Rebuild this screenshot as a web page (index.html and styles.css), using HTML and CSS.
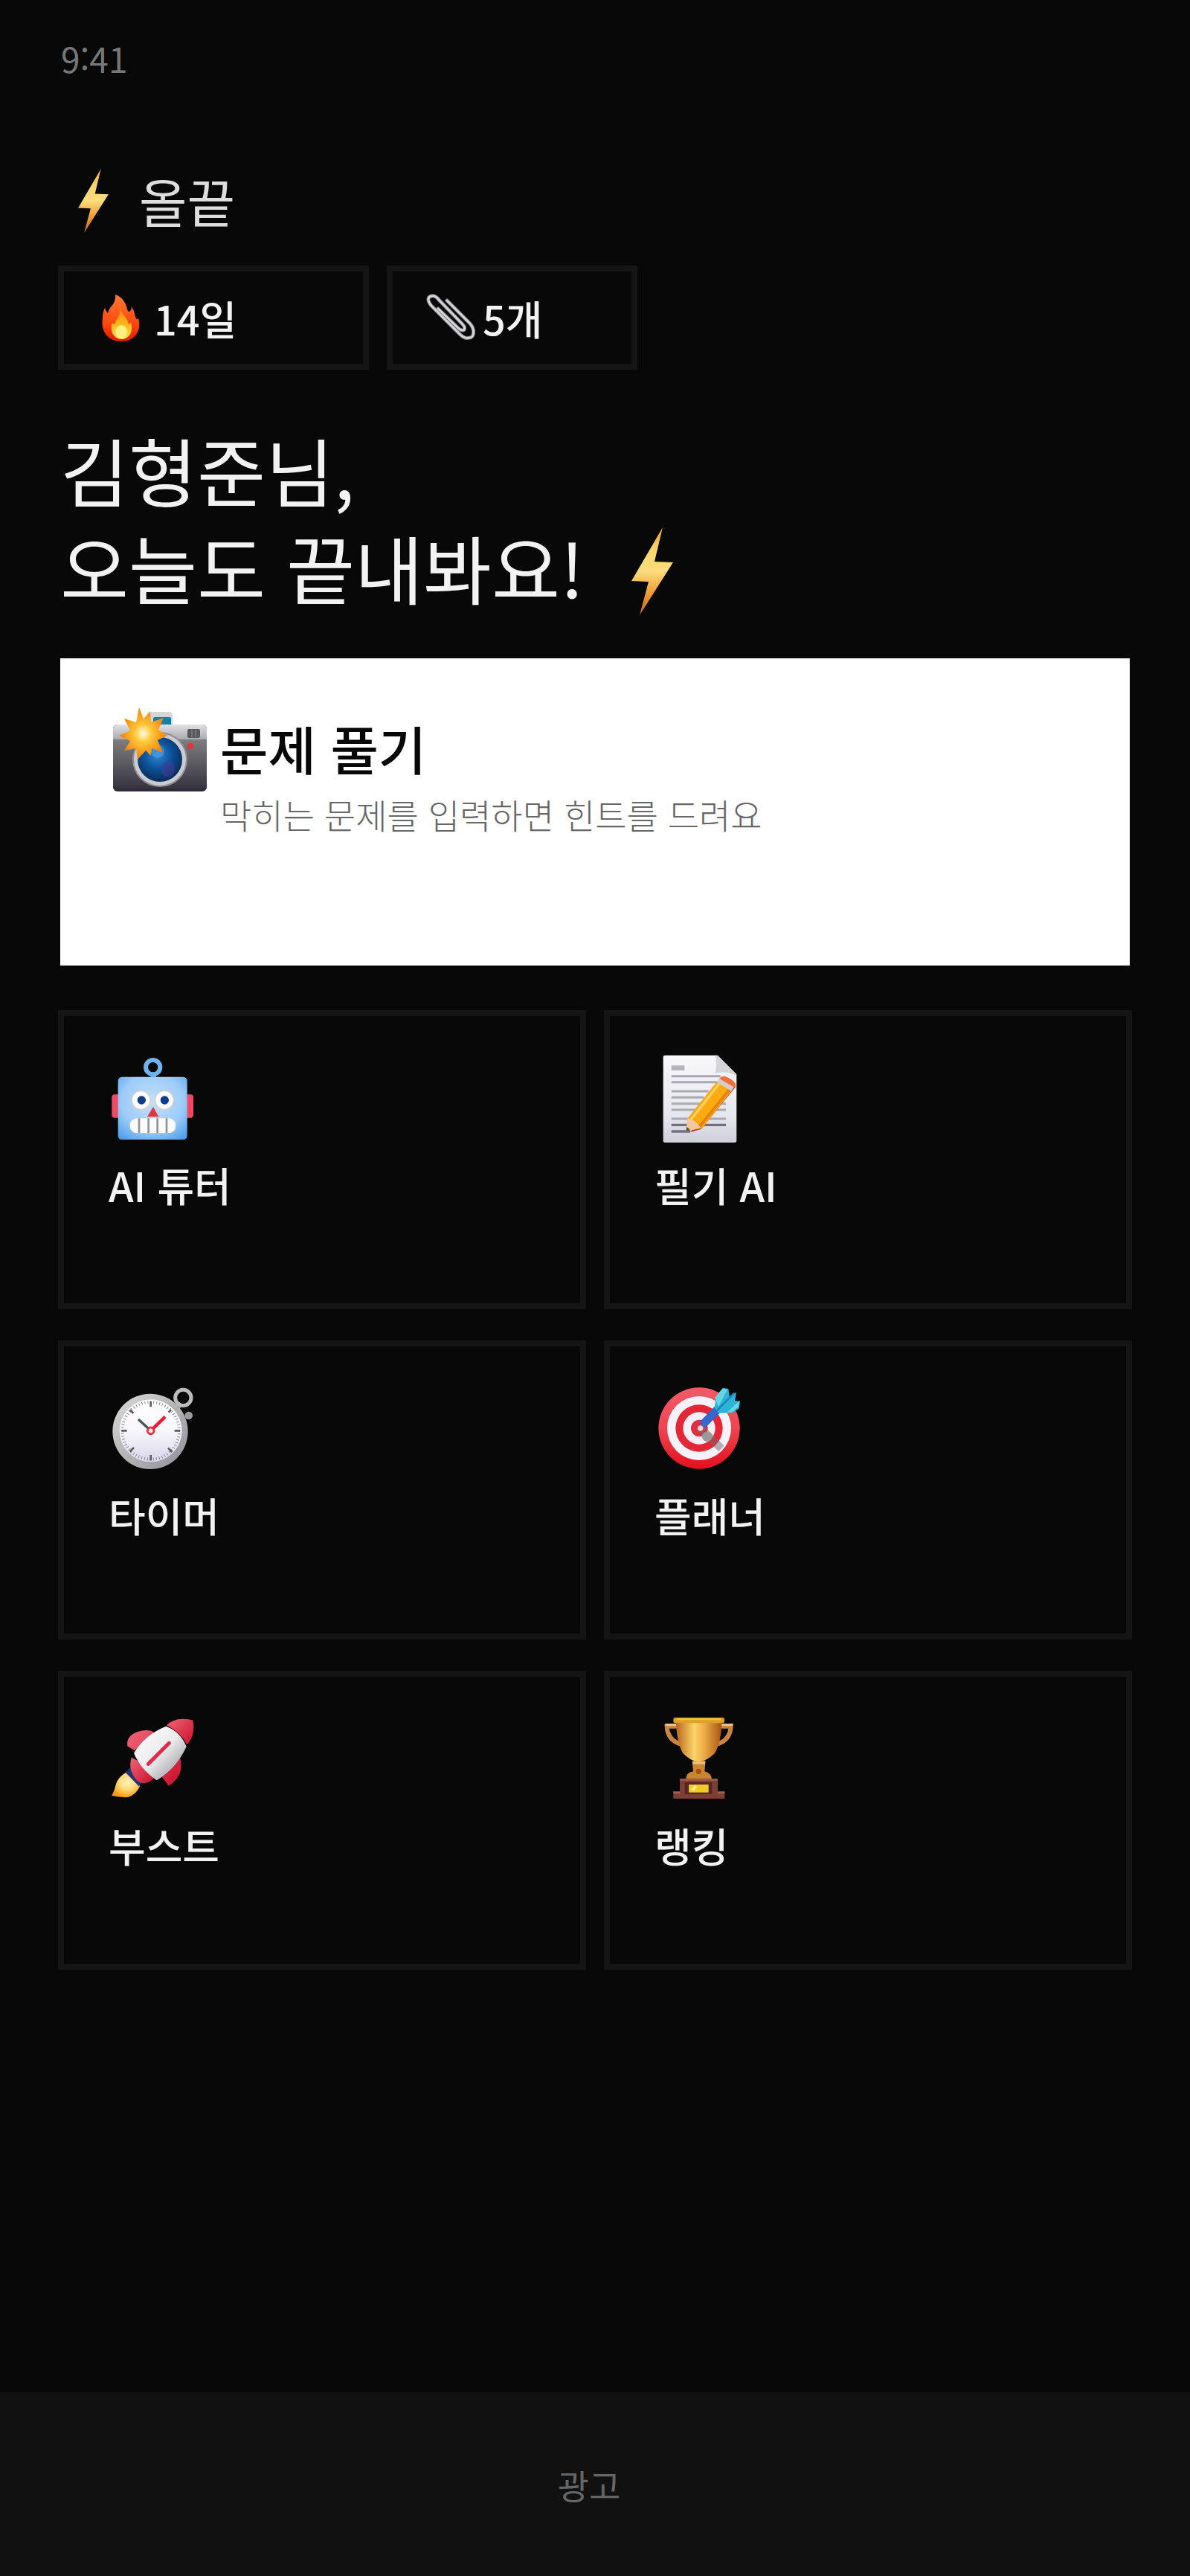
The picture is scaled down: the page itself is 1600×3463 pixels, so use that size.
FILE: index.html
```html
<!DOCTYPE html>
<html lang="ko">
<head>
<meta charset="utf-8">
<meta name="viewport" content="width=device-width, initial-scale=1">
<title>올끝</title>
<link rel="stylesheet" href="styles.css">
</head>
<body>
<svg class="defs" width="0" height="0" aria-hidden="true">
  <defs>
    <linearGradient id="boltFill" x1="0" y1="0" x2="0" y2="1"><stop offset="0" stop-color="#f0a030"/><stop offset=".25" stop-color="#fbd56c"/><stop offset=".5" stop-color="#fddc7c"/><stop offset=".72" stop-color="#f0a23c"/><stop offset="1" stop-color="#c96a12"/></linearGradient>
    <linearGradient id="flame" x1="0" y1="0" x2="0" y2="1"><stop offset="0" stop-color="#ff7a33"/><stop offset=".6" stop-color="#ff4a10"/><stop offset="1" stop-color="#e01800"/></linearGradient>
    <linearGradient id="flameIn" x1="0" y1="0" x2="0" y2="1"><stop offset="0" stop-color="#ff8a10"/><stop offset=".5" stop-color="#ffb41c"/><stop offset="1" stop-color="#ffe050"/></linearGradient>
    <linearGradient id="camBody" x1="0" y1="0" x2="0" y2="1"><stop offset="0" stop-color="#7e7e80"/><stop offset="1" stop-color="#37343f"/></linearGradient>
    <linearGradient id="camTop" x1="0" y1="0" x2="0" y2="1"><stop offset="0" stop-color="#e2e2e6"/><stop offset="1" stop-color="#a9a9ae"/></linearGradient>
    <radialGradient id="lens" cx=".45" cy=".4" r=".6"><stop offset="0" stop-color="#2f86d6"/><stop offset=".55" stop-color="#0c4f96"/><stop offset="1" stop-color="#0a2c55"/></radialGradient>
    <radialGradient id="burst"><stop offset="0" stop-color="#fffbe0"/><stop offset=".35" stop-color="#ffc838"/><stop offset="1" stop-color="#f57c08"/></radialGradient>
    <radialGradient id="robotFace" cx=".5" cy=".4" r=".75"><stop offset="0" stop-color="#c4e0fc"/><stop offset=".6" stop-color="#9ccbf8"/><stop offset="1" stop-color="#4a9cea"/></radialGradient>
    <linearGradient id="paper" x1="0" y1="0" x2="0" y2="1"><stop offset="0" stop-color="#f8f8fa"/><stop offset=".7" stop-color="#e6e6ee"/><stop offset="1" stop-color="#cfcfda"/></linearGradient>
    <linearGradient id="dial" x1="0" y1="0" x2="0" y2="1"><stop offset="0" stop-color="#ffffff"/><stop offset=".5" stop-color="#f8f7fc"/><stop offset="1" stop-color="#d9d6ea"/></linearGradient>
    <linearGradient id="rim" x1="0" y1="0" x2="1" y2="1"><stop offset="0" stop-color="#dcdcdc"/><stop offset=".5" stop-color="#b4b4b6"/><stop offset="1" stop-color="#918f9c"/></linearGradient>
    <linearGradient id="board" x1="0" y1="0" x2="0" y2="1"><stop offset="0" stop-color="#f25a66"/><stop offset=".5" stop-color="#ee4552"/><stop offset="1" stop-color="#e3101c"/></linearGradient>
    <linearGradient id="hull" x1="0" y1="0" x2="1" y2="1"><stop offset="0" stop-color="#ffffff"/><stop offset=".5" stop-color="#ebebed"/><stop offset="1" stop-color="#86868e"/></linearGradient>
    <linearGradient id="redPart" x1="0" y1="0" x2="1" y2="1"><stop offset="0" stop-color="#f26476"/><stop offset="1" stop-color="#c80f2c"/></linearGradient>
    <radialGradient id="exhaust" cx=".55" cy=".4" r=".6"><stop offset="0" stop-color="#fff3b8"/><stop offset=".5" stop-color="#ffd97a"/><stop offset="1" stop-color="#f59a12"/></radialGradient>
    <linearGradient id="cup" x1="0" y1="0" x2="1" y2="0"><stop offset="0" stop-color="#b8641a"/><stop offset=".4" stop-color="#fbd468"/><stop offset=".6" stop-color="#eeae48"/><stop offset="1" stop-color="#a85414"/></linearGradient>
    <symbol id="bolt" viewBox="0 0 56 118"><path d="M42 0 0 72l23 1-12 45L56 47 31 46z" fill="url(#boltFill)"/></symbol>
  </defs>
</svg>

<header class="top">
  <p class="clock">9:41</p>
  <div class="brand">
    <svg class="brand-bolt" aria-hidden="true"><use href="#bolt"/></svg>
    <span>올끝</span>
  </div>
  <div class="badges">
    <div class="badge badge-streak">
      <svg class="badge-icon" viewBox="131 399 66 64" aria-hidden="true">
        <path d="M155 400c10 3 15 13 16 20 1 3 3 4 4 2 2-2 2-3 1-6 4 4 5 9 6 14 1 3 2 4 4 2 5 18-6 31-23 31-17 0-28-13-25-31 0-6 1-10 3-14 1 3 2 5 4 7 1-3 1-4 3-7 3-4 8-8 7-18z" fill="url(#flame)"/>
        <path d="M162 419c1 7 9 12 10 18 0 3 2 3 4 1 4 12-3 22-12 22-11 0-17-11-13-22 2 2 3 2 4 0 2-6 7-10 7-19z" fill="url(#flameIn)"/>
        <ellipse cx="163" cy="450" rx="8" ry="9" fill="#fff080"/>
      </svg>
      <span>14일</span>
    </div>
    <div class="badge badge-clips">
      <svg class="badge-icon" viewBox="573 399 66 64" aria-hidden="true">
        <g fill="none" stroke-linecap="round" stroke-linejoin="round">
          <path d="M601 408l30 30c8 8 7 20 0 20-5 2-9-1-13-5l-38-38c-6-7-5-12 0-13 4-1 7 1 10 5l32 33c4 4 3 8 0 8-2 0-4-1-6-3l-27-26" stroke="#77767c" stroke-width="5"/>
          <path d="M601 408l30 30c8 8 7 20 0 20-5 2-9-1-13-5l-38-38c-6-7-5-12 0-13 4-1 7 1 10 5l32 33c4 4 3 8 0 8-2 0-4-1-6-3l-27-26" stroke="#d4d3d8" stroke-width="3"/>
        </g>
      </svg>
      <span>5개</span>
    </div>
  </div>
</header>

<main class="home">
  <h1 class="greeting">
    <span class="greeting-line">김형준님,</span>
    <span class="greeting-line">오늘도 끝내봐요!<svg class="greeting-bolt" aria-hidden="true"><use href="#bolt"/></svg></span>
  </h1>

  <a class="hero" href="#solve">
    <svg class="hero-icon" viewBox="150 948 130 120" aria-hidden="true">
      <rect x="199" y="957" width="33" height="24" rx="5" fill="#d4d4da"/>
      <rect x="206" y="964" width="24" height="13" rx="2" fill="#1681a8"/>
      <rect x="152" y="974" width="126" height="90" rx="6" fill="#302c3c"/>
      <path d="M158 974h114a6 6 0 0 1 6 6v14H152v-14a6 6 0 0 1 6-6z" fill="url(#camTop)"/>
      <path d="M152 994h126v66H152z" fill="url(#camBody)"/>
      <rect x="252" y="980" width="17" height="12" rx="2" fill="#5a5a5e"/><path d="M258 981v10M263 981v10" stroke="#8c8c90"/>
      <circle cx="256" cy="1003" r="4" fill="#e8313a"/>
      <circle cx="215" cy="1021" r="37" fill="#8f9095"/><circle cx="215" cy="1021" r="35" fill="#cbccd3"/>
      <circle cx="215" cy="1021" r="30" fill="url(#lens)"/>
      <ellipse cx="226" cy="1034" rx="9" ry="11" fill="#4938a0" opacity=".5"/><circle cx="212" cy="1010" r="9" fill="#5bb2f2" opacity=".45"/>
      <path d="M187 951l6 15 9-10 1 15 17-6-7 16 12 8-13 6 7 17-15-6-1 10-7-7-11 12-2-15-16 3 8-13-15-7 15-7-8-16 16 5z" fill="url(#burst)"/>
    </svg>
    <span class="hero-copy">
      <strong class="hero-title">문제 풀기</strong>
      <span class="hero-sub">막히는 문제를 입력하면 힌트를 드려요</span>
    </span>
  </a>

  <nav class="tiles" aria-label="메뉴">
    <a class="tile" href="#tutor">
      <svg class="tile-icon" viewBox="48 48 348 360" aria-hidden="true">
        <path d="M229 125v25" stroke="#4a9cea" stroke-width="22"/>
        <circle cx="227" cy="104" r="29" fill="none" stroke="#70b2ef" stroke-width="18"/>
        <rect x="61" y="214" width="40" height="94" rx="12" fill="#ee4a66"/><rect x="350" y="214" width="40" height="94" rx="12" fill="#ee4a66"/>
        <rect x="86" y="143" width="279" height="253" rx="16" fill="url(#robotFace)"/>
        <circle cx="179" cy="237" r="40" fill="#d5d2cc"/><circle cx="273" cy="237" r="40" fill="#d5d2cc"/>
        <circle cx="179" cy="237" r="35" fill="#fcfcfa"/><circle cx="273" cy="237" r="35" fill="#fcfcfa"/>
        <circle cx="181" cy="237" r="17" fill="#0d3d8c"/><circle cx="274" cy="237" r="17" fill="#0d3d8c"/>
        <path d="M228 264l22 40h-46z" fill="#e6323e"/>
        <rect x="134" y="310" width="185" height="60" rx="28" fill="#fbfafa"/>
        <path d="M171 310v60M209 310v60M245 310v60M282 310v60" stroke="#8f9298" stroke-width="8"/>
      </svg>
      <span class="tile-label">AI 튜터</span>
    </a>
    <a class="tile" href="#notes">
      <svg class="tile-icon" viewBox="60 48 348 360" aria-hidden="true">
        <path d="M103 56h208l80 80v264q0 8-8 8H103q-8 0-8-8V64q0-8 8-8z" fill="url(#paper)"/>
        <path d="M128 107h53" stroke="#b4b4bc" stroke-width="20"/>
        <path d="M128 140h198M128 164h190M128 201h150M128 226h130M128 251h220M128 276h220M128 312h220" stroke="#a9a9b3" stroke-width="9"/>
        <path d="M128 337h220M128 363h76" stroke="#72727f" stroke-width="10"/>
        <path d="M306 56q6 60-3 72 50-10 88 10v-6L315 56z" fill="#d3d3da"/>
        <path d="M204 366l44-12 140-172-22-12z" fill="#b8304a"/>
        <path d="M188 362l6-52 116-146 62 34-120 152z" fill="#fbaa10"/>
        <path d="M208 314l112-142" stroke="#ffd066" stroke-width="10"/><path d="M240 346l122-152" stroke="#e58414" stroke-width="12"/>
        <path d="M188 362l6-52q30 6 52 38z" fill="#f3c9a0"/><path d="M188 362l2-18 14 14z" fill="#57433a"/>
        <path d="M310 164l16-20 60 34-16 22z" fill="#d6ccc8"/><path d="M322 150q14-18 38-2 28 14 28 30l-6 8z" fill="#f4703a"/>
      </svg>
      <span class="tile-label">필기 AI</span>
    </a>
    <a class="tile" href="#timer">
      <svg class="tile-icon" viewBox="48 60 348 360" aria-hidden="true">
        <path d="M318 160l22-18" stroke="#8c8c90" stroke-width="22"/>
        <circle cx="349" cy="117" r="32" fill="none" stroke="#bcbcbe" stroke-width="15"/>
        <circle cx="371" cy="189" r="16" fill="#9c9c9f"/>
        <circle cx="216" cy="253" r="152" fill="url(#rim)"/><circle cx="218" cy="250" r="126" fill="url(#dial)"/>
        <circle cx="218" cy="250" r="115" fill="none" stroke="#8a8894" stroke-width="12" stroke-dasharray="3 9"/>
        <path d="M218 132v22M218 348v22M100 250h22M314 250h22M290 176l10-10M134 334l16-16M288 320l16 16M134 166l14 14" stroke="#5c5b66" stroke-width="8"/>
        <path d="M168 204l50 46" stroke="#475458" stroke-width="10"/><path d="M212 256l64-62" stroke="#f01c2c" stroke-width="13"/>
        <circle cx="218" cy="250" r="13" fill="#fff" stroke="#f2303e" stroke-width="9"/>
      </svg>
      <span class="tile-label">타이머</span>
    </a>
    <a class="tile" href="#planner">
      <svg class="tile-icon" viewBox="60 60 348 360" aria-hidden="true">
        <circle cx="240" cy="240" r="164" fill="url(#board)"/><circle cx="240" cy="240" r="129" fill="#f6f2fa"/>
        <circle cx="240" cy="240" r="95" fill="#e32735"/><circle cx="240" cy="240" r="65" fill="#f6f0f6"/><circle cx="241" cy="240" r="34" fill="#dc3040"/>
        <path d="M246 240l84 82" stroke="#7c6870" stroke-width="32" stroke-opacity=".5"/><circle cx="272" cy="274" r="20" fill="#999"/>
        <circle cx="245" cy="240" r="11" fill="#e5dcd0"/>
        <path d="M262 218l58-60" stroke="#3667cf" stroke-width="33" stroke-linecap="round"/>
        <path d="M302 158l6-44 28-37 22 4 4 30 28-16-6 34 21 3-4 28-27 18-54 1z" fill="#2bb3d8"/>
        <path d="M304 116l30-36 20 4-36 70zM352 176l52-48-6 26-26 22z" fill="#65d6e6"/><path d="M310 170l72-72" stroke="#1c83bd" stroke-width="8"/>
      </svg>
      <span class="tile-label">플래너</span>
    </a>
    <a class="tile" href="#boost">
      <svg class="tile-icon" viewBox="48 42 348 360" aria-hidden="true">
        <path d="M118 278q-30 18-40 46-4 22-17 48 34 8 66 6 34-12 48-46z" fill="url(#exhaust)"/>
        <path d="M126 268l54 56" stroke="#1c3475" stroke-width="28"/>
        <path d="M152 190l-28-18q-6-42 42-58 42-14 68 4zM260 292l30 40q42-26 50-66 2-32-6-54z" fill="url(#redPart)"/>
        <path d="M140 218q52 20 90 86-34 28-62 12-44-42-28-98z" fill="url(#redPart)"/>
        <path d="M150 200q44-74 130-108 58 22 82 82-40 88-120 136-66-46-92-110z" fill="url(#hull)"/>
        <path d="M282 88q38-38 106-20 12 60-24 98-26-50-82-78z" fill="url(#redPart)"/>
        <path d="M208 244l84-84" stroke="#e02c4a" stroke-width="15" stroke-linecap="round"/>
      </svg>
      <span class="tile-label">부스트</span>
    </a>
    <a class="tile" href="#ranking">
      <svg class="tile-icon" viewBox="60 42 348 360" aria-hidden="true">
        <path d="M152 92h-42q2 56 56 72M326 92h42q-2 56-56 72" fill="none" stroke="#c98442" stroke-width="18"/>
        <path d="M150 86h-46M328 86h48" stroke="#edca94" stroke-width="8"/>
        <path d="M212 230h54l-4 44q28 6 30 34H186q2-30 30-34z" fill="#c98532"/><path d="M214 240h50" stroke="#f0c080" stroke-width="10"/><circle cx="238" cy="274" r="11" fill="#a7500e"/>
        <path d="M146 72h186q-4 92-30 130-30 30-64 34-36-6-64-36-24-42-28-128z" fill="url(#cup)"/>
        <rect x="136" y="57" width="206" height="22" rx="8" fill="#dda224"/><path d="M150 64h178" stroke="#f2c14c" stroke-width="6"/>
        <path d="M162 304h153v50h28v30H136v-30h26z" fill="#7b4034"/><path d="M162 308h153M136 360h26M315 360h28" stroke="#a2604c" stroke-width="7"/>
        <rect x="182" y="318" width="110" height="48" fill="#592524"/><rect x="198" y="327" width="80" height="32" fill="#f1cc26"/><path d="M212 350l16-16" stroke="#fff08a" stroke-width="12"/>
      </svg>
      <span class="tile-label">랭킹</span>
    </a>
  </nav>
</main>

<footer class="ad">광고</footer>
</body>
</html>
```
FILE: styles.css
```css
* { box-sizing: border-box; }

body {
  margin: 0;
  min-height: 100vh;
  display: flex;
  flex-direction: column;
  background: #080808;
  color: #f2f2f2;
  font-family: "Noto Sans CJK KR", "Noto Sans", sans-serif;
}

p, h1 { margin: 0; font-weight: 400; }
a { color: inherit; text-decoration: none; }
svg { display: block; flex: none; }
.defs { position: absolute; }

.top { padding: 48px 78px 0; }

.clock {
  padding-left: 4px;
  font-size: 46px;
  line-height: 60px;
  color: #777;
}

.brand {
  display: flex;
  align-items: center;
  gap: 41px;
  margin-top: 117px;
  padding-left: 27px;
  font-size: 70px;
  line-height: 90px;
  color: #ddd;
}
.brand-bolt { width: 41px; height: 86px; }

.badges { display: flex; gap: 24px; margin-top: 42px; }
.badge {
  display: flex;
  align-items: center;
  gap: 10px;
  height: 140px;
  padding-left: 45px;
  border: 8px solid #151515;
  font-size: 54px;
  font-weight: 500;
}
.badge-streak { width: 418px; }
.badge-clips { width: 337px; }
.badge-icon { width: 66px; height: 64px; }

.home { padding: 68px 78px 80px; }

.greeting {
  padding-left: 3px;
  font-size: 100px;
  line-height: 131px;
}
.greeting-line {
  display: flex;
  align-items: center;
  gap: 64px;
}
.greeting-bolt {
  width: 56px;
  height: 118px;
  margin-top: 12px;
}

.hero {
  display: flex;
  gap: 16px;
  min-height: 413px;
  margin: 58px 3px 0;
  padding: 63px 69px;
  background: #fff;
}
.hero-icon { width: 130px; height: 120px; }
.hero-copy { display: flex; flex-direction: column; }
.hero-title {
  font-size: 70px;
  line-height: 116px;
  font-weight: 500;
  color: #080808;
}
.hero-sub {
  font-size: 46px;
  line-height: 60px;
  font-weight: 300;
  color: #666;
}

.tiles {
  display: grid;
  grid-template-columns: 1fr 1fr;
  gap: 42px 24px;
  margin-top: 60px;
}
.tile {
  display: flex;
  flex-direction: column;
  gap: 25px;
  min-height: 402px;
  padding: 50px 60px;
  border: 8px solid #151515;
}
.tile-icon { width: 116px; height: 120px; }
.tile-label {
  font-size: 54px;
  line-height: 64px;
  font-weight: 500;
}

.ad {
  margin-top: auto;
  padding: 94px 16px 93px 0;
  background: #111;
  color: #666;
  font-size: 46px;
  line-height: 60px;
  text-align: center;
}
```
